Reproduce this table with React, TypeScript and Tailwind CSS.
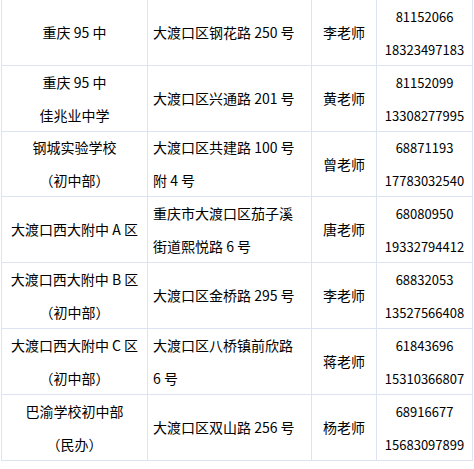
const rows = [
  { school: ["重庆 95 中"], addr: ["大渡口区钢花路 250 号"], teacher: "李老师", phone: ["81152066", "18323497183"], h: "h-[66px]" },
  { school: ["重庆 95 中", "佳兆业中学"], addr: ["大渡口区兴通路 201 号"], teacher: "黄老师", phone: ["81152099", "13308277995"], h: "h-[66px]" },
  { school: ["钢城实验学校", "（初中部）"], addr: ["大渡口区共建路 100 号", "附 4 号"], teacher: "曾老师", phone: ["68871193", "17783032540"], h: "h-[65px]" },
  { school: ["大渡口西大附中 A 区"], addr: ["重庆市大渡口区茄子溪", "街道熙悦路 6 号"], teacher: "唐老师", phone: ["68080950", "19332794412"], h: "h-[66px]" },
  { school: ["大渡口西大附中 B 区", "（初中部）"], addr: ["大渡口区金桥路 295 号"], teacher: "李老师", phone: ["68832053", "13527566408"], h: "h-[66px]" },
  { school: ["大渡口西大附中 C 区", "（初中部）"], addr: ["大渡口区八桥镇前欣路", "6 号"], teacher: "蒋老师", phone: ["61843696", "15310366807"], h: "h-[66px]" },
  { school: ["巴渝学校初中部", "（民办）"], addr: ["大渡口区双山路 256 号"], teacher: "杨老师", phone: ["68916677", "15683097899"], h: "h-[66px]" },
];

const cell = "flex flex-col justify-center border-r border-b border-[#dde3f3]";

export default function App() {
  return (
    <div className="w-[474px] h-[469px] bg-white overflow-hidden text-[14px] leading-[33px] text-black" style={{ fontFamily: '"Noto Sans CJK SC", "Liberation Sans", sans-serif' }}>
      {/* contact table, top edge scrolled just out of view */}
      <div className="ml-px -mt-px w-[472px] border-l border-t border-[#dde3f3]">
        {rows.map((r, i) => (
          <div key={i} className="grid grid-cols-[146px_164px_65px_96px]">
            <div className={`${cell} ${r.h} items-center text-center`}>
              {r.school.map((s) => <span key={s}>{s}</span>)}
            </div>
            <div className={`${cell} ${r.h} pl-[5px]`}>
              {r.addr.map((s) => <span key={s}>{s}</span>)}
            </div>
            <div className={`${cell} ${r.h} items-center`}>{r.teacher}</div>
            <div className={`${cell} ${r.h} items-center text-[13px]`}>
              {r.phone.map((s) => <span key={s}>{s}</span>)}
            </div>
          </div>
        ))}
      </div>
    </div>
  );
}
